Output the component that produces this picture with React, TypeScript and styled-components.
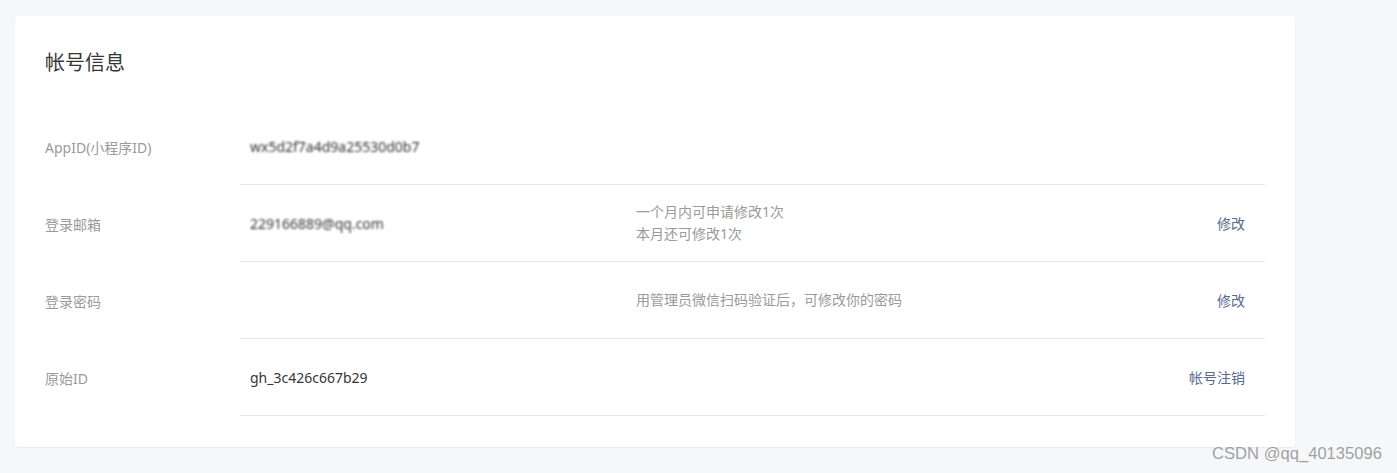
import React from 'react';
import styled, { createGlobalStyle } from 'styled-components';

const GlobalStyle = createGlobalStyle`
  html, body {
    margin: 0;
    padding: 0;
    background: #f6f7f9;
    font-family: "Noto Sans", "Noto Sans CJK SC", sans-serif;
  }
`;

const Page = styled.div`
  position: relative;
  width: 1397px;
  height: 473px;
  padding: 16px 0 0 15px;
  box-sizing: border-box;
`;

const Card = styled.section`
  width: 1280px;
  box-sizing: border-box;
  background: #fff;
  border-radius: 4px;
  box-shadow: 0 1px 2px rgba(0, 0, 0, 0.06);
  padding: 33px 30px 31px 30px;
`;

const Title = styled.h2`
  margin: 0 0 31px;
  font-size: 20px;
  line-height: 28px;
  font-weight: 400;
  color: #353535;
`;

const Row = styled.div`
  display: grid;
  grid-template-columns: 195px 1fr;
  height: 77px;
`;

const Label = styled.div`
  display: flex;
  align-items: center;
  font-size: 14px;
  color: #9a9a9a;
`;

const Content = styled.div`
  display: grid;
  grid-template-columns: 386px 1fr auto;
  align-items: center;
  border-bottom: 1px solid #e7e7eb;
  padding: 0 20px 0 10px;
`;

const Value = styled.div<{ masked?: boolean }>`
  font-size: 14px;
  color: #353535;
  filter: ${p => (p.masked ? 'blur(0.8px)' : 'none')};
`;

const Desc = styled.div`
  font-size: 14px;
  line-height: 22px;
  color: #9a9a9a;
`;

const Action = styled.a`
  font-size: 14px;
  color: #576b95;
  text-decoration: none;
  cursor: pointer;
`;

const Watermark = styled.div`
  position: absolute;
  right: 15px;
  top: 444px;
  font-family: "Liberation Sans", Arial, sans-serif;
  font-size: 16.6px;
  color: rgba(130, 130, 130, 0.75);
`;

type Item = {
  label: string;
  value?: string;
  masked?: boolean;
  desc?: string[];
  action?: string;
};

const items: Item[] = [
  { label: 'AppID(小程序ID)', value: 'wx5d2f7a4d9a25530d0b7', masked: true },
  {
    label: '登录邮箱',
    value: '229166889@qq.com',
    masked: true,
    desc: ['一个月内可申请修改1次', '本月还可修改1次'],
    action: '修改',
  },
  { label: '登录密码', desc: ['用管理员微信扫码验证后，可修改你的密码'], action: '修改' },
  { label: '原始ID', value: 'gh_3c426c667b29', action: '帐号注销' },
];

export default function App() {
  return (
    <Page>
      <GlobalStyle />
      <Card>
        <Title>帐号信息</Title>
        {items.map(item => (
          <Row key={item.label}>
            <Label>{item.label}</Label>
            <Content>
              <Value masked={item.masked}>{item.value}</Value>
              <Desc>
                {item.desc?.map(line => (
                  <div key={line}>{line}</div>
                ))}
              </Desc>
              {item.action ? <Action>{item.action}</Action> : <span />}
            </Content>
          </Row>
        ))}
      </Card>
      <Watermark>CSDN @qq_40135096</Watermark>
    </Page>
  );
}
